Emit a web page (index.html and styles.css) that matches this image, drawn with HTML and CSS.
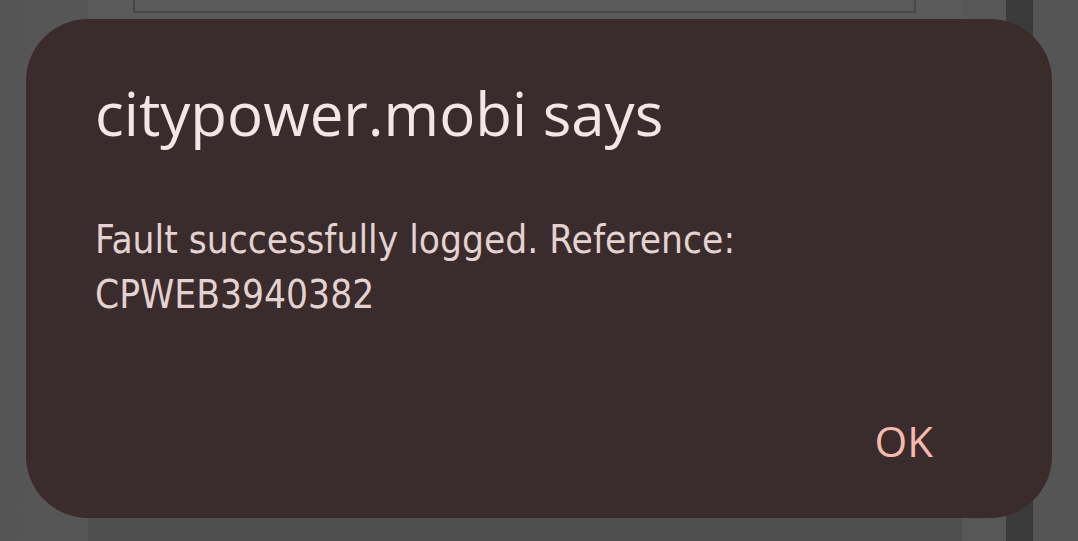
FILE: index.html
```html
<!DOCTYPE html>
<html lang="en">
<head>
  <meta charset="UTF-8" />
  <title>citypower.mobi</title>
  <meta name="viewport" content="width=device-width, initial-scale=1" />
  <link rel="stylesheet" href="styles.css">
</head>
<body>
  <div class="page">
    <div class="strip left"></div>
    <div class="strip main">
      <div class="field"></div>
    </div>
    <div class="strip gutter"></div>
    <div class="strip scroll"></div>
    <div class="strip right"></div>
  </div>

  <div class="dialog">
    <h1 class="title">citypower.mobi says</h1>
    <p class="message">Fault successfully logged. Reference:<br>CPWEB3940382</p>
    <div class="actions">
      <button class="ok">OK</button>
    </div>
  </div>
</body>
</html>
```

FILE: styles.css
```css
body {
  margin: 0;
  width: 1078px;
  height: 541px;
  overflow: hidden;
  position: relative;
  background: #555;
}
.page {
  display: flex;
  height: 541px;
}
.strip.left {
  width: 88px;
  background: linear-gradient(to right, #555, #565656);
}
.strip.main {
  width: 874px;
  background: linear-gradient(to bottom, #5a5a5a 0, #5a5a5a 500px, #4f4f4f 520px);
  padding-left: 45px;
  box-sizing: border-box;
}
.field {
  width: 783px;
  height: 13px;
  border: 2px solid #474747;
  border-top: none;
  box-sizing: border-box;
}
.strip.gutter {
  width: 44px;
  background: #575757;
}
.strip.scroll {
  width: 27px;
  background: #3b3b3b;
}
.strip.right {
  flex: 1;
  background: #555;
}
.dialog {
  position: absolute;
  left: 26px;
  top: 19px;
  width: 1026px;
  height: 499px;
  box-sizing: border-box;
  background: #3a2b2c;
  border-radius: 62px;
  padding: 59px 69px 0;
  display: flex;
  flex-direction: column;
}
.title {
  margin: 0;
  font-family: "Open Sans", sans-serif;
  font-weight: 400;
  font-size: 60px;
  line-height: 70px;
  color: #f4e6e4;
  white-space: nowrap;
}
.message {
  margin: 64px 0 0;
  font-family: "DejaVu Sans Condensed", sans-serif;
  font-size: 38.5px;
  line-height: 55px;
  color: #e3d2d0;
}
.actions {
  display: flex;
  justify-content: flex-end;
  margin-top: auto;
  padding: 0 50px 49px 0;
}
.ok {
  background: none;
  border: none;
  padding: 0;
  font-family: "Open Sans", sans-serif;
  font-size: 42px;
  color: #f7b9ae;
  cursor: pointer;
}
```
